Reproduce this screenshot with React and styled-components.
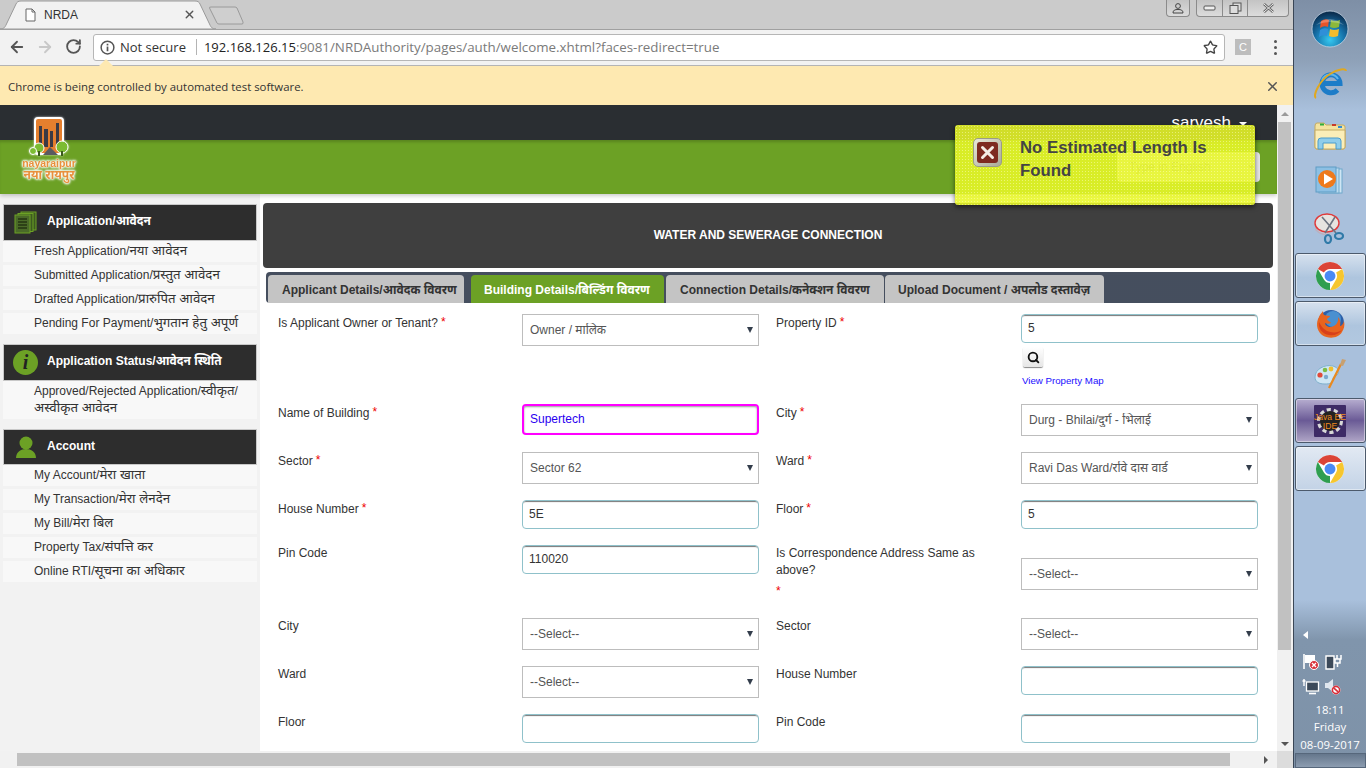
import React from 'react';
import styled, { createGlobalStyle } from 'styled-components';
import { ArrowLeft, ArrowRight, RotateCw, Star, X, Search } from 'lucide-react';

const sans = `"Liberation Sans", "Noto Sans Devanagari", "Lohit Devanagari", "FreeSans", "Noto Sans", sans-serif`;

const Global = createGlobalStyle`
  html, body { margin: 0; padding: 0; width: 1366px; height: 768px; overflow: hidden; }
  * { box-sizing: border-box; }
  body { font-family: ${sans}; font-size: 12px; color: #333; }
`;

const Screen = styled.div`
  position: relative;
  display: flex;
  width: 1366px;
  height: 768px;
  overflow: hidden;
`;

const Browser = styled.div`
  display: flex;
  flex-direction: column;
  width: 1293px;
  height: 768px;
  background: #fff;
`;

/* chrome window frame */
const TabStrip = styled.div`
  position: relative;
  display: flex;
  justify-content: flex-end;
  flex: none;
  height: 29px;
  padding-right: 4px;
  background: #cbcbcb;
`;

const TabShape = styled.svg`
  position: absolute;
  left: 0;
  top: 0;
`;

const TabBody = styled.div`
  position: absolute;
  left: 25px;
  top: 0;
  display: flex;
  align-items: center;
  width: 171px;
  height: 29px;
  font-size: 12px;
  color: #333;
`;

const TabTitle = styled.span`
  flex: 1;
  margin-left: 8px;
`;

const WinButtons = styled.div`
  display: flex;
  align-items: flex-start;
  gap: 6px;
`;

const WinGroup = styled.div`
  display: flex;
  height: 17px;
  border: 1px solid #8b8b8b;
  border-top: none;
  border-radius: 0 0 4px 4px;
  background: linear-gradient(#c4c4c4, #dcdcdc);
`;

const WinBtn = styled.div`
  display: flex;
  align-items: center;
  justify-content: center;
  width: ${p => p.$w}px;
  & + & { border-left: 1px solid #8b8b8b; }
`;

const Toolbar = styled.div`
  position: relative;
  display: flex;
  align-items: center;
  flex: none;
  height: 37px;
  padding-bottom: 1px;
  background: #f2f2f2;
  border-top: 1px solid #a0a0a0;
  border-bottom: 1px solid #b4b4b4;
`;

const NavBtn = styled.div`
  display: flex;
  justify-content: center;
  width: 28px;
  color: ${p => (p.$off ? '#c8c8c8' : '#555')};
`;

const NavGroup = styled.div`
  display: flex;
  width: 93px;
  padding-left: 3px;
`;

const Omnibox = styled.div`
  display: flex;
  align-items: center;
  width: 1132px;
  height: 27px;
  padding: 0 6px 0 6px;
  background: #fff;
  border: 1px solid #b6b6b6;
  border-radius: 3px;
  font-family: "Open Sans", ${sans};
  font-size: 13px;
`;

const InfoIcon = styled.svg`
  flex: none;
  margin-right: 5px;
`;

const Secure = styled.span`
  color: #333;
`;

const Divider = styled.span`
  width: 1px;
  height: 16px;
  margin: 0 7px 0 10px;
  background: #b4b4b4;
`;

const UrlHost = styled.span`
  color: #222;
`;

const UrlRest = styled.span`
  flex: 1;
  color: #7a7a7a;
  font-size: 13.35px;
`;

const ExtIcon = styled.div`
  display: flex;
  align-items: center;
  justify-content: center;
  width: 16px;
  height: 16px;
  margin-left: 10px;
  background: #bdbdbd;
  color: #fff;
  font-size: 11px;
`;

const Kebab = styled.div`
  display: flex;
  flex-direction: column;
  gap: 3px;
  margin-left: 23px;
  span { width: 3px; height: 3px; border-radius: 50%; background: #555; }
`;

const Beak = styled.div`
  position: absolute;
  left: 99px;
  bottom: -1px;
  width: 14px;
  height: 7px;
  background: #fee9b1;
  clip-path: polygon(50% 0, 100% 100%, 0 100%);
`;

const Infobar = styled.div`
  display: flex;
  align-items: center;
  justify-content: space-between;
  flex: none;
  height: 39px;
  padding: 2px 13px 0 8px;
  background: #fee9b1;
  font-family: "Open Sans", ${sans};
  font-size: 11.4px;
  color: #333;
`;

/* page */
const Viewport = styled.div`
  display: flex;
  flex: 1;
  min-height: 0;
`;

const Page = styled.div`
  position: relative;
  flex: 1;
  min-width: 0;
  overflow: hidden;
`;

const Header = styled.header`
  position: relative;
  box-shadow: 0 2px 4px rgba(0, 0, 0, 0.2);
  z-index: 1;
`;

const TopBand = styled.div`
  display: flex;
  justify-content: flex-end;
  align-items: center;
  height: 35px;
  padding-right: 30px;
  background: #2a2e32;
  color: #fff;
  font-size: 17px;
`;

const Caret = styled.span`
  width: 0;
  height: 0;
  margin: 2px 0 0 8px;
  border: 4px solid transparent;
  border-top-color: #fff;
  border-bottom: none;
`;

const GreenBand = styled.div`
  display: flex;
  justify-content: flex-end;
  height: 54px;
  padding: 12px 17px 0 0;
  background: #6ca125;
  box-shadow: inset 0 3px 3px -1px rgba(0, 0, 0, 0.18);
`;

const LangSelect = styled.div`
  display: flex;
  align-items: center;
  justify-content: space-between;
  width: 143px;
  height: 30px;
  padding: 0 6px 0 12px;
  background: #e6e6e6;
  border-radius: 4px;
  color: #999;
`;

const LogoWrap = styled.div`
  position: absolute;
  left: 20px;
  top: 12px;
  display: flex;
  flex-direction: column;
  align-items: center;
  width: 58px;
  filter: drop-shadow(0 0 1px rgba(255, 255, 255, 0.7));
`;

const LogoEn = styled.div`
  margin-top: 1px;
  font-size: 10.5px;
  line-height: 10px;
  font-weight: bold;
  color: #e8903c;
  text-shadow: 0 0 2px #fff, 0 0 2px #fff, 0 0 3px #fff;
`;

const LogoHi = styled.div`
  font-size: 12px;
  line-height: 15px;
  font-weight: bold;
  color: #e8903c;
  white-space: nowrap;
  text-shadow: 0 0 2px #fff, 0 0 2px #fff, 0 0 3px #fff;
`;

const Body = styled.div`
  display: flex;
  height: 560px;
`;

const Sidebar = styled.aside`
  flex: none;
  width: 260px;
  padding: 10px 3px 0;
  background: #f2f2f2;
`;

const Section = styled.section`
  margin-bottom: ${p => p.$gap}px;
`;

const SectionHead = styled.div`
  display: flex;
  align-items: center;
  height: ${p => p.$h}px;
  background: #2d2d2d;
  border: 1px solid #c8c8c8;
  color: #fff;
  font-weight: bold;
  font-size: 12px;
`;

const HeadTitle = styled.span`
  margin-top: -2px;
`;

const HeadIcon = styled.div`
  display: flex;
  justify-content: center;
  flex: none;
  width: 43px;
`;

const InfoBadge = styled.div`
  display: flex;
  align-items: center;
  justify-content: center;
  width: 25px;
  height: 25px;
  border-radius: 50%;
  background: #6ca125;
  color: #222;
  font-family: "Liberation Serif", serif;
  font-style: italic;
  font-size: 20px;
  font-weight: bold;
`;

const NavItem = styled.div`
  margin-bottom: 3px;
  padding: 2px 8px 2px 31px;
  background: #f8f8f8;
  line-height: 17px;
  color: #333;
`;

const Deva = styled.span`
  font-size: 13.3px;
  line-height: 1;
`;

const Main = styled.main`
  flex: 1;
  min-width: 0;
  padding: 9px 4px 0 3px;
`;

const TitleBar = styled.div`
  display: flex;
  align-items: center;
  justify-content: center;
  height: 65px;
  padding-bottom: 1px;
  background: #3f3f3f;
  border-radius: 4px;
  color: #fff;
  font-weight: bold;
  font-size: 12px;
`;

const TabBar = styled.div`
  display: flex;
  align-items: flex-end;
  height: 31px;
  margin: 4px 3px 0;
  padding-left: 2px;
  background-color: #333d4b;
  background-image: radial-gradient(#465060 0.7px, transparent 0.8px);
  background-size: 2px 2px;
  border-radius: 4px;
`;

const FormTab = styled.div`
  flex: none;
  width: ${p => p.$w}px;
  height: 28px;
  margin-left: ${p => p.$ml}px;
  padding-left: ${p => p.$pl}px;
  background: ${p => (p.$active ? '#6ca125' : '#c4c4c4')};
  border-radius: 4px 4px 0 0;
  color: ${p => (p.$active ? '#fff' : '#333')};
  font-weight: bold;
  font-size: 12px;
  line-height: 30px;
  white-space: nowrap;
`;

const Form = styled.form`
  margin: 0;
  padding: 11px 0 0 15px;
`;

const Row = styled.div`
  display: grid;
  grid-template-columns: 244px 237px 262px 237px;
  align-items: start;
  margin-bottom: 16px;
`;

const Label = styled.label`
  display: block;
  padding-right: 10px;
  line-height: 17px;
  color: #333;
  &:nth-child(3) { margin-left: 17px; }
`;

const Req = styled.span`
  display: inline-block;
  margin-left: 3px;
  vertical-align: 1px;
  color: #e00;
`;

const ReqLine = styled.span`
  display: block;
  margin: 4px 0 2px;
  color: #e00;
`;

const SelectBox = styled.div`
  position: relative;
  align-self: ${p => (p.$center ? 'center' : 'start')};
  height: 32px;
  &::after {
    content: '';
    position: absolute;
    right: 6px;
    top: 13px;
    border: 3.5px solid transparent;
    border-top: 6px solid #333d4b;
    border-bottom: none;
  }
`;

const Select = styled.select`
  width: 100%;
  height: 100%;
  padding: 0 16px 0 7px;
  appearance: none;
  background: #fff;
  border: 1px solid #bdbdbd;
  border-radius: 0;
  color: #555;
  font: 12px ${sans};
`;

const Input = styled.input`
  display: block;
  width: 100%;
  height: 29px;
  padding: 0 6px 1px;
  background: #fff;
  border: 1px solid #8fc1ca;
  border-radius: 4px;
  box-shadow: inset 0 2px 1px -1px #777;
  color: #333;
  font: 12px ${sans};
`;

const FocusInput = styled(Input)`
  height: 31px;
  border: 2px solid #f0f;
  box-shadow: inset 0 1px 2px #999;
  color: #2a00f0;
  padding: 0 6px 2px;
`;

const SearchBtn = styled.div`
  display: flex;
  align-items: center;
  justify-content: center;
  width: 20px;
  height: 20px;
  margin: 4px 0 7px 2px;
  background: linear-gradient(#fff, #e6e6e6);
  border-radius: 2px;
  box-shadow: 0 1px 1px #888;
  color: #111;
`;

const MapLink = styled.a`
  display: block;
  margin-left: 1px;
  color: #1a0dff;
  font-size: 9.7px;
  line-height: 14px;
`;

/* page scrollbars */
const VScroll = styled.div`
  display: flex;
  flex-direction: column;
  align-items: center;
  justify-content: space-between;
  flex: none;
  width: 16px;
  padding: 7px 0 5px;
  background: #f1f1f1;
`;

const VThumb = styled.div`
  position: absolute;
  left: 1278px;
  top: 122px;
  width: 13px;
  height: 528px;
  background: #c1c1c1;
`;

const ArrowUp = styled.span`
  border: 4px solid transparent;
  border-bottom: 4px solid #9a9a9a;
  border-top: none;
`;

const ArrowDown = styled.span`
  border: 4px solid transparent;
  border-top: 4px solid #555;
  border-bottom: none;
`;

const HScroll = styled.div`
  display: flex;
  flex: none;
  align-items: center;
  height: 17px;
  padding-left: 17px;
  background: #f1f1f1;
`;

const HThumb = styled.div`
  width: 1213px;
  height: 13px;
  background: #c1c1c1;
`;

const ArrowRightSmall = styled.span`
  margin-left: 34px;
  border: 4px solid transparent;
  border-left: 4px solid #555;
  border-right: none;
`;

const Corner = styled.div`
  width: 16px;
  height: 17px;
  margin-left: auto;
  background: #dcdcdc;
`;

/* toast */
const Toast = styled.div`
  position: absolute;
  left: 955px;
  top: 125px;
  z-index: 5;
  display: flex;
  width: 300px;
  height: 80px;
  padding: 13px 10px 0 18px;
  background-color: rgba(232, 247, 40, 0.88);
  background-image: radial-gradient(rgba(255, 255, 190, 0.5) 0.6px, transparent 0.8px);
  background-size: 3px 3px;
  border-radius: 3px;
  box-shadow: 0 2px 5px rgba(0, 0, 0, 0.55);
  color: #444;
  font-size: 16.8px;
  font-weight: bold;
  line-height: 23px;
`;

const ToastText = styled.span`
  margin-top: -2px;
`;

const ToastIcon = styled.div`
  display: flex;
  align-items: center;
  justify-content: center;
  flex: none;
  width: 29px;
  height: 29px;
  margin-right: 18px;
  background: linear-gradient(135deg, #e8e8d8, #a8aa98);
  border: 1px solid #9a9c88;
  border-radius: 5px;
`;

const ToastIconInner = styled.div`
  display: flex;
  align-items: center;
  justify-content: center;
  width: 21px;
  height: 21px;
  background: #7e2a20;
  border-radius: 3px;
`;

/* windows taskbar */
const Taskbar = styled.div`
  display: flex;
  flex-direction: column;
  align-items: center;
  flex: none;
  width: 73px;
  height: 768px;
  border-left: 1px solid #3a4656;
  background: linear-gradient(#7e8fa6 0, #8ea1b8 60px, #a9c0dc 110px, #a9c0dc 600px, #8095ac 640px, #7e92a8 768px);
`;

const Pinned = styled.div`
  display: flex;
  align-items: center;
  justify-content: center;
  flex: none;
  height: ${p => p.$h}px;
`;

const Running = styled.div`
  display: flex;
  align-items: center;
  justify-content: center;
  flex: none;
  width: 71px;
  height: 45px;
  margin-bottom: 3px;
  border: 1px solid #4c5a6c;
  border-radius: 3px;
  background: ${p => (p.$purple
    ? 'linear-gradient(#b7aed0, #6a5a96 50%, #8c80ac 75%, #b0a6c8)'
    : p.$bright
      ? 'linear-gradient(#e2e9f3, #c3d3e6)'
      : 'linear-gradient(#d6e1ee, #aec5de 55%, #b2c8e0)')};
  box-shadow: inset 0 0 0 1px rgba(255, 255, 255, 0.45);
`;

const Tray = styled.div`
  display: flex;
  flex-direction: column;
  align-items: center;
  width: 100%;
  margin-top: auto;
  color: #fff;
  font-size: 12px;
`;

const TrayArrow = styled.span`
  align-self: flex-start;
  margin: 0 0 14px 9px;
  border: 4px solid transparent;
  border-right: 5px solid #fff;
  border-left: none;
`;

const TrayIcons = styled.div`
  display: grid;
  grid-template-columns: 22px 22px;
  gap: 8px 0;
  margin-bottom: 6px;
  margin-right: 12px;
`;

const Clock = styled.div`
  font-family: "Open Sans", ${sans};
  font-size: 11.4px;
  line-height: 17.5px;
  text-align: center;
`;

const ShowDesktop = styled.div`
  width: 71px;
  height: 15px;
  margin-top: 0;
  border: 1px solid #56677b;
  background: linear-gradient(#65778c, #8c9cb0);
`;

/* drawn icons */
const Chrome = ({ size = 30 }) => (
  <svg width={size} height={size} viewBox="0 0 32 32">
    <circle cx="16" cy="16" r="15" fill="#fff" />
    <path d="M3.01 8.5A15 15 0 0 1 28.99 8.5L16 8.5A7.5 7.5 0 0 0 9.5 12.25Z" fill="#db4437" />
    <path d="M28.99 8.5A15 15 0 0 1 16 31L22.5 19.75A7.5 7.5 0 0 0 22.5 12.25Z" fill="#f6c62f" />
    <path d="M16 31A15 15 0 0 1 3.01 8.5L9.5 19.75A7.5 7.5 0 0 0 16 23.5Z" fill="#2f9e50" />
    <circle cx="16" cy="16" r="5.8" fill="#4a8af4" />
  </svg>
);

const Firefox = () => (
  <svg width="32" height="32" viewBox="0 0 32 32">
    <circle cx="17" cy="15" r="13" fill="#2c5fa8" />
    <circle cx="19" cy="11" r="8" fill="#4a90d0" />
    <path d="M9 3C7 6 6 6 5 9C2 14 2 22 8 27C14 31 24 31 28 24C30 21 31 17 30 13C29 17 27 18 26 18C27 14 26 11 24 9C25 14 22 18 17 19C13 19 11 17 11 15C13 16 15 16 17 15C16 13 13 13 13 11C15 9 16 9 16 8C13 8 11 7 10 7C9 6 9 4 9 3Z" fill="#e8641f" />
    <path d="M5 14C4 20 8 26 15 27C20 28 25 26 28 22C24 25 18 25 13 23C9 21 7 18 5 14Z" fill="#d8401a" />
  </svg>
);

const Orb = () => (
  <svg width="38" height="38" viewBox="0 0 38 38">
    <defs>
      <radialGradient id="orb" cx="50%" cy="80%" r="75%">
        <stop offset="0" stopColor="#35c8f0" />
        <stop offset="0.55" stopColor="#1570a8" />
        <stop offset="1" stopColor="#0b2e50" />
      </radialGradient>
    </defs>
    <circle cx="19" cy="19" r="18" fill="url(#orb)" stroke="#c8d6e4" strokeWidth="0.8" />
    <path d="M10 11Q14 8 18 10L17 17Q13 15 9 18Z" fill="#e8542a" />
    <path d="M20 10Q24 12 29 10L28 17Q23 19 19 17Z" fill="#8cb83a" />
    <path d="M9 20Q13 17 17 19L16 26Q12 24 8 27Z" fill="#2f8fd8" />
    <path d="M19 19Q23 21 28 19L27 26Q22 28 18 26Z" fill="#f2bc2c" />
    <path d="M5 15Q19 3 33 15Q19 9 5 15Z" fill="#fff" opacity="0.25" />
  </svg>
);

const IE = () => (
  <svg width="36" height="34" viewBox="0 0 36 34">
    <path d="M11 15.500H28A9 9 0 1 0 25.500 22" stroke="#1d7cc8" strokeWidth="5" fill="none" />
    <path d="M10 12A9 9 0 0 1 26 11" stroke="#5fb4ea" strokeWidth="2" fill="none" />
    <path d="M4 30C0 28 8 12 18 6C26 1 34 0 34 3" stroke="#e0a820" strokeWidth="2" fill="none" />
  </svg>
);

const Folder = () => (
  <svg width="32" height="30" viewBox="0 0 32 30">
    <path d="M1 5Q1 2 3 2H10L12 4H29Q31 4 31 6V26Q31 28 29 28H3Q1 28 1 26Z" fill="#f4e3a0" stroke="#c4aa62" />
    <rect x="6" y="2.5" width="4" height="2" fill="#2fae3a" />
    <rect x="18" y="3" width="4" height="2" fill="#c83a2a" />
    <rect x="24" y="5" width="4" height="2" fill="#2f8fd8" />
    <path d="M1 9H31V26Q31 28 29 28H3Q1 28 1 26Z" fill="#fbeeb8" stroke="#c4aa62" />
    <path d="M4 28V20Q4 17 7 17H24Q27 17 27 20V28H22V22H9V28Z" fill="#8fcdea" stroke="#4a9ccc" />
  </svg>
);

const MediaPlayer = () => (
  <svg width="32" height="30" viewBox="0 0 32 30">
    <rect x="8" y="3" width="20" height="24" fill="#cfe6f4" stroke="#6fa8cc" />
    <rect x="5" y="2" width="20" height="25" fill="#bcdcf0" stroke="#6fa8cc" />
    <rect x="2" y="1" width="20" height="25" fill="#8cc0e4" stroke="#5f9cc4" />
    <circle cx="13" cy="13" r="9" fill="#ee7a1c" />
    <path d="M10 7.5L19 13L10 18.5Z" fill="#fff" />
  </svg>
);

const Snip = () => (
  <svg width="32" height="32" viewBox="0 0 32 32">
    <path d="M2 14V18Q8 24 16 22" fill="#c8c4d0" stroke="#b8b0c0" strokeWidth="1.500" />
    <ellipse cx="13" cy="11" rx="12" ry="9" fill="#e6e4e0" stroke="#e03a3a" strokeWidth="1.4" />
    <path d="M8 5L22 21M21 5L11 21" stroke="#6c7480" strokeWidth="1.6" />
    <ellipse cx="25" cy="24" rx="4" ry="3" fill="none" stroke="#2f7aa8" strokeWidth="2.2" />
    <ellipse cx="14" cy="27" rx="3" ry="4" fill="none" stroke="#2f7aa8" strokeWidth="2.2" />
  </svg>
);

const Palette = () => (
  <svg width="34" height="32" viewBox="0 0 34 32">
    <path d="M2 19C2 11 12 6 20 8C26 10 27 14 24 17C22 19 20 18 20 21C20 25 17 26 12 26C6 26 2 24 2 19Z" fill="#cfe6f4" stroke="#7fb0cc" />
    <circle cx="7" cy="17" r="2.6" fill="#e04a3a" />
    <circle cx="12" cy="12" r="2.3" fill="#7cbc48" />
    <circle cx="18" cy="11" r="2.4" fill="#f0c030" />
    <circle cx="13" cy="19" r="2.2" fill="#7aa8d0" />
    <path d="M16 30L28 6" stroke="#e88a20" strokeWidth="2.2" />
    <path d="M27 7L29 1L33 2L30 8Z" fill="#c8a070" />
  </svg>
);

const EclipseText = styled.text`
  font-family: "Liberation Sans", sans-serif;
  font-size: 8.6px;
  fill: #f08a20;
`;

const Eclipse = () => (
  <svg width="32" height="32" viewBox="0 0 32 32">
    <rect width="32" height="32" rx="1" fill="#3e2a66" />
    <circle cx="16" cy="16" r="11" fill="none" stroke="#d8d8d8" strokeWidth="4" strokeDasharray="4 2.9" />
    <circle cx="16" cy="16" r="10" fill="#222" />
    <EclipseText x="16" y="15" textAnchor="middle">Java EE</EclipseText>
    <EclipseText x="16" y="24" textAnchor="middle">IDE</EclipseText>
  </svg>
);

const DocStack = () => (
  <svg width="24" height="23" viewBox="0 0 24 23">
    <rect x="7" y="1" width="15" height="18" fill="#3d5a20" stroke="#6ca125" />
    <rect x="4" y="2.5" width="15" height="18" fill="#3d5a20" stroke="#6ca125" />
    <rect x="1" y="4" width="15" height="18" fill="#4a6a28" stroke="#6ca125" />
    <path d="M4 8H13M4 11H13M4 14H13M4 17H13" stroke="#243412" strokeWidth="1.4" />
  </svg>
);

const Person = () => (
  <svg width="22" height="22" viewBox="0 0 22 22">
    <circle cx="11" cy="7" r="6.5" fill="#6ca125" />
    <path d="M1 22C1 16 6 13 11 13C16 13 21 16 21 22Z" fill="#6ca125" />
  </svg>
);

const LogoMark = () => (
  <svg width="46" height="40" viewBox="0 0 46 40">
    <rect x="9" y="1" width="28" height="36" rx="3" fill="#e57f2e" stroke="#fff" strokeWidth="2" />
    <path d="M13 9H16V30H13ZM18 12H22V30H18ZM24 14H27V30H24ZM30 6H33V30H30Z" fill="#3b3a44" />
    <path d="M17 38L24 30L32 38Z" fill="#5a5a60" />
    <circle cx="13" cy="31" r="5" fill="#7cbc32" stroke="#fff" />
    <circle cx="7" cy="34" r="3.5" fill="#7cbc32" stroke="#fff" />
    <rect x="12" y="34" width="2" height="5" fill="#3a5a1a" />
    <circle cx="36" cy="30" r="6" fill="#7cbc32" stroke="#fff" />
    <rect x="35" y="34" width="2" height="5" fill="#3a5a1a" />
  </svg>
);

const InfoCircle = () => (
  <InfoIcon width="15" height="15" viewBox="0 0 16 16">
    <circle cx="8" cy="8" r="6.8" fill="none" stroke="#555" strokeWidth="1.6" />
    <rect x="7.1" y="7" width="1.8" height="5" fill="#555" />
    <rect x="7.1" y="4" width="1.8" height="1.8" fill="#555" />
  </InfoIcon>
);

const TrayFlag = () => (
  <svg width="18" height="17" viewBox="0 0 18 17">
    <path d="M2 1V16" stroke="#fff" strokeWidth="1.6" />
    <path d="M3 2H13V10H3Z" fill="#fff" />
    <circle cx="12" cy="12" r="4.5" fill="#d8303a" stroke="#fff" />
    <path d="M10 10L14 14M14 10L10 14" stroke="#fff" strokeWidth="1.3" />
  </svg>
);

const TrayPower = () => (
  <svg width="18" height="17" viewBox="0 0 18 17">
    <path d="M2 3H10V16H2Z" fill="#3c4a5a" stroke="#fff" strokeWidth="1.4" />
    <path d="M10 6H13V2M13 6H17V2M11 6V10H16V6M13.5 10V14" stroke="#fff" strokeWidth="1.5" fill="none" />
  </svg>
);

const TrayNet = () => (
  <svg width="18" height="17" viewBox="0 0 18 17">
    <path d="M2 1V8M0.5 3H3.5" stroke="#fff" strokeWidth="1.4" />
    <rect x="4.5" y="4" width="12" height="9" fill="#3c4a5a" stroke="#fff" strokeWidth="1.3" />
    <path d="M7 15.5H14" stroke="#fff" strokeWidth="1.6" />
  </svg>
);

const TraySound = () => (
  <svg width="18" height="17" viewBox="0 0 18 17">
    <path d="M1 5H4L9 1V14L4 10H1Z" fill="#dfe6ee" />
    <circle cx="12" cy="12" r="4.5" fill="#fff" />
    <circle cx="12" cy="12" r="3.6" fill="none" stroke="#d8303a" strokeWidth="1.6" />
    <path d="M9.6 9.8L14.4 14.2" stroke="#d8303a" strokeWidth="1.6" />
  </svg>
);

const sections = [
  {
    title: 'Application/आवेदन', icon: <DocStack />, h: 37, gap: 10,
    items: ['Fresh Application/नया आवेदन', 'Submitted Application/प्रस्तुत आवेदन', 'Drafted Application/प्रारुपित आवेदन', 'Pending For Payment/भुगतान हेतु अपूर्ण'],
  },
  {
    title: 'Application Status/आवेदन स्थिति', icon: <InfoBadge>i</InfoBadge>, h: 37, gap: 10,
    items: ['Approved/Rejected Application/स्वीकृत/अस्वीकृत आवेदन'],
  },
  {
    title: 'Account', icon: <Person />, h: 36, gap: 0,
    items: ['My Account/मेरा खाता', 'My Transaction/मेरा लेनदेन', 'My Bill/मेरा बिल', 'Property Tax/संपत्ति कर', 'Online RTI/सूचना का अधिकार'],
  },
];

const tabs = [
  { label: 'Applicant Details/आवेदक विवरण', w: 196, ml: 0, pl: 14 },
  { label: 'Building Details/बिल्डिंग विवरण', w: 193, ml: 7, pl: 13, active: true },
  { label: 'Connection Details/कनेक्शन विवरण', w: 218, ml: 2, pl: 14 },
  { label: 'Upload Document / अपलोड दस्तावेज़', w: 219, ml: 1, pl: 13 },
];

// hindi runs set a little larger, the original font draws them wider
const mixed = text =>
  text.split(/([\u0900-\u097F]+(?: [\u0900-\u097F]+)*)/).map((part, i) =>
    i % 2 ? <Deva key={i}>{part}</Deva> : part
  );

const Sel = ({ value, center }) => (
  <SelectBox $center={center}>
    <Select defaultValue={value}><option>{value}</option></Select>
  </SelectBox>
);

export default function App() {
  return (
    <Screen>
      <Global />
      <Browser>
        <TabStrip>
          <TabShape width="250" height="29" viewBox="0 0 250 29">
            <path d="M0 29C4 29 5 27 6 25L16 4C17 2 18 1 21 1H195C198 1 199 2 200 4L210 25C211 27 212 29 216 29Z" fill="#f2f2f2" stroke="#9a9a9a" />
            <path d="M209.5 8Q209 7 211 7H235Q236 7 237 8L243 22Q243.500 24 242 24H219Q217.500 24 217 23Z" fill="#cfcfcf" stroke="#9a9a9a" />
          </TabShape>
          <TabBody>
            <svg width="11" height="14" viewBox="0 0 11 14">
              <path d="M1 1H7L10 4V13H1Z" fill="#fff" stroke="#666" />
              <path d="M7 1V4H10" fill="none" stroke="#666" />
            </svg>
            <TabTitle>NRDA</TabTitle>
            <X size={13} strokeWidth={2.5} color="#555" />
          </TabBody>
          <WinButtons>
            <WinGroup>
              <WinBtn $w={22}>
                <svg width="12" height="11" viewBox="0 0 12 11">
                  <circle cx="6" cy="3" r="2.4" fill="none" stroke="#444" />
                  <path d="M1 10C1 7 3 6.500 6 6.500C9 6.500 11 7 11 10Z" fill="none" stroke="#444" />
                </svg>
              </WinBtn>
            </WinGroup>
            <WinGroup>
              <WinBtn $w={25}>
                <svg width="13" height="6" viewBox="0 0 13 6"><rect x="1" y="1" width="11" height="4" rx="1" fill="#eee" stroke="#555" /></svg>
              </WinBtn>
              <WinBtn $w={25}>
                <svg width="13" height="12" viewBox="0 0 13 12">
                  <rect x="4" y="1" width="8" height="8" fill="#ddd" stroke="#555" />
                  <rect x="1" y="3.500" width="8" height="8" fill="#ddd" stroke="#555" />
                </svg>
              </WinBtn>
              <WinBtn $w={41}>
                <svg width="13" height="10" viewBox="0 0 13 10">
                  <path d="M2 1L11 9M11 1L2 9" stroke="#666" strokeWidth="2.6" />
                  <path d="M2 1L11 9M11 1L2 9" stroke="#eee" strokeWidth="1" />
                </svg>
              </WinBtn>
            </WinGroup>
          </WinButtons>
        </TabStrip>
        <Toolbar>
          <NavGroup>
            <NavBtn><ArrowLeft size={18} strokeWidth={2.4} /></NavBtn>
            <NavBtn $off><ArrowRight size={18} strokeWidth={2.4} /></NavBtn>
            <NavBtn><RotateCw size={17} strokeWidth={2.6} /></NavBtn>
          </NavGroup>
          <Omnibox>
            <InfoCircle />
            <Secure>Not secure</Secure>
            <Divider />
            <UrlHost>192.168.126.15</UrlHost>
            <UrlRest>:9081/NRDAuthority/pages/auth/welcome.xhtml?faces-redirect=true</UrlRest>
            <Star size={15} strokeWidth={2.2} color="#444" />
          </Omnibox>
          <ExtIcon>C</ExtIcon>
          <Kebab><span /><span /><span /></Kebab>
          <Beak />
        </Toolbar>
        <Infobar>
          <span>Chrome is being controlled by automated test software.</span>
          <X size={15} strokeWidth={2.4} color="#555" />
        </Infobar>
        <Viewport>
          <Page>
            <Header>
              <TopBand>sarvesh<Caret /></TopBand>
              <GreenBand>
                <LangSelect>Type in English<span>▾</span></LangSelect>
              </GreenBand>
              <LogoWrap>
                <LogoMark />
                <LogoEn>nayaraipur</LogoEn>
                <LogoHi>नया रायपुर</LogoHi>
              </LogoWrap>
            </Header>
            <Body>
              <Sidebar>
                {sections.map(s => (
                  <Section key={s.title} $gap={s.gap}>
                    <SectionHead $h={s.h}>
                      <HeadIcon>{s.icon}</HeadIcon>
                      <HeadTitle>{s.title}</HeadTitle>
                    </SectionHead>
                    {s.items.map(i => <NavItem key={i}>{mixed(i)}</NavItem>)}
                  </Section>
                ))}
              </Sidebar>
              <Main>
                <TitleBar>WATER AND SEWERAGE CONNECTION</TitleBar>
                <TabBar>
                  {tabs.map(t => (
                    <FormTab key={t.label} $w={t.w} $ml={t.ml} $pl={t.pl} $active={t.active}>{t.label}</FormTab>
                  ))}
                </TabBar>
                <Form>
                  <Row>
                    <Label>Is Applicant Owner or Tenant?<Req>*</Req></Label>
                    <Sel value="Owner / मालिक" />
                    <Label>Property ID<Req>*</Req></Label>
                    <div>
                      <Input defaultValue="5" />
                      <SearchBtn><Search size={13} strokeWidth={3.4} /></SearchBtn>
                      <MapLink>View Property Map</MapLink>
                    </div>
                  </Row>
                  <Row>
                    <Label>Name of Building<Req>*</Req></Label>
                    <FocusInput defaultValue="Supertech" />
                    <Label>City<Req>*</Req></Label>
                    <Sel value="Durg - Bhilai/दुर्ग - भिलाई" />
                  </Row>
                  <Row>
                    <Label>Sector<Req>*</Req></Label>
                    <Sel value="Sector 62" />
                    <Label>Ward<Req>*</Req></Label>
                    <Sel value="Ravi Das Ward/रवि दास वार्ड" />
                  </Row>
                  <Row>
                    <Label>House Number<Req>*</Req></Label>
                    <Input defaultValue="5E" />
                    <Label>Floor<Req>*</Req></Label>
                    <Input defaultValue="5" />
                  </Row>
                  <Row>
                    <Label>Pin Code</Label>
                    <Input defaultValue="110020" />
                    <Label>Is Correspondence Address Same as above?<ReqLine>*</ReqLine></Label>
                    <Sel value="--Select--" center />
                  </Row>
                  <Row>
                    <Label>City</Label>
                    <Sel value="--Select--" />
                    <Label>Sector</Label>
                    <Sel value="--Select--" />
                  </Row>
                  <Row>
                    <Label>Ward</Label>
                    <Sel value="--Select--" />
                    <Label>House Number</Label>
                    <Input />
                  </Row>
                  <Row>
                    <Label>Floor</Label>
                    <Input />
                    <Label>Pin Code</Label>
                    <Input />
                  </Row>
                </Form>
              </Main>
            </Body>
          </Page>
          <VScroll><ArrowUp /><ArrowDown /></VScroll>
        </Viewport>
        <HScroll>
          <HThumb />
          <ArrowRightSmall />
          <Corner />
        </HScroll>
      </Browser>
      <Taskbar>
        <Pinned $h={57}><Orb /></Pinned>
        <Pinned $h={56}><IE /></Pinned>
        <Pinned $h={46}><Folder /></Pinned>
        <Pinned $h={44}><MediaPlayer /></Pinned>
        <Pinned $h={50}><Snip /></Pinned>
        <Running><Chrome /></Running>
        <Running><Firefox /></Running>
        <Pinned $h={49}><Palette /></Pinned>
        <Running $purple><Eclipse /></Running>
        <Running $bright><Chrome /></Running>
        <Tray>
          <TrayArrow />
          <TrayIcons>
            <TrayFlag /><TrayPower /><TrayNet /><TraySound />
          </TrayIcons>
          <Clock>18:11<br />Friday<br />08-09-2017</Clock>
          <ShowDesktop />
        </Tray>
      </Taskbar>
      <VThumb />
      <Toast>
        <ToastIcon>
          <ToastIconInner>
            <svg width="15" height="15" viewBox="0 0 15 15"><path d="M2.500 2.500L12.500 12.500M12.500 2.500L2.500 12.500" stroke="#f4ece4" strokeWidth="3" strokeLinecap="round" /></svg>
          </ToastIconInner>
        </ToastIcon>
        <ToastText>No Estimated Length Is Found</ToastText>
      </Toast>
    </Screen>
  );
}
